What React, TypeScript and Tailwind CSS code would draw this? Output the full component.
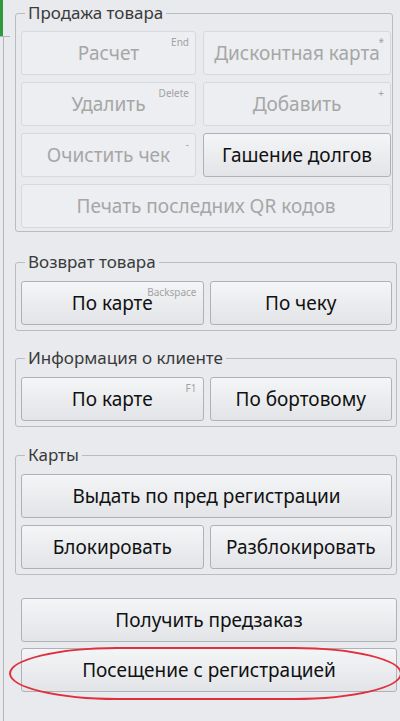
import type { ReactNode } from 'react'

type BtnProps = {
  label: string
  hint?: string
  disabled?: boolean
  className?: string
}

function Btn({ label, hint, disabled, className = '' }: BtnProps) {
  return (
    <button
      type="button"
      disabled={disabled}
      className={[
        'relative flex h-[44px] items-center justify-center rounded-[3px] border text-[19px]',
        disabled
          ? 'border-[#d7d9dd] bg-[#eceef1] text-[#a6a6a6]'
          : 'border-[#aeb1b6] bg-gradient-to-b from-[#f4f5f7] to-[#e2e4e7] text-[#111111]',
        className,
      ].join(' ')}
    >
      {label}
      {hint && (
        <span className="absolute right-[6px] top-[4px] text-[10px] leading-[12px] text-[#a2a2a2]">
          {hint}
        </span>
      )}
    </button>
  )
}

function Group({
  title,
  className = '',
  children,
}: {
  title: string
  className?: string
  children: ReactNode
}) {
  return (
    <fieldset
      className={[
        'rounded-[3px] border border-[#b9bcc1] pl-[5px]',
        className,
      ].join(' ')}
    >
      <legend className="ml-[4px] px-[3px] text-[17px] leading-[20px] text-[#3a3a3a]">
        {title}
      </legend>
      {children}
    </fieldset>
  )
}

export default function App() {
  return (
    <div
      className="relative flex h-[721px] w-[400px] overflow-hidden bg-[#e8eaee]"
      style={{ fontFamily: '"Noto Sans", "Open Sans", sans-serif' }}
    >
      <div className="flex w-[4px] shrink-0 flex-col">
        <div className="h-[36px] w-[3px] bg-[#2f9a3c]" />
        <div className="h-px w-[10px] bg-[#b4b6ba]" />
        <div className="flex-1 border-r border-[#b4b6ba]" />
      </div>

      <div className="flex flex-1 flex-col pl-[11px] pr-[3px] pt-[3px]">
        <Group title="Продажа товара" className="mr-[4px] pb-[3px] pr-px">
          <div className="mt-[8px] grid grid-cols-[175px_1fr] gap-x-[7px] gap-y-[7px]">
            <Btn label="Расчет" hint="End" disabled />
            <Btn label="Дисконтная карта" hint="*" disabled />
            <Btn label="Удалить" hint="Delete" disabled />
            <Btn label="Добавить" hint="+" disabled />
            <Btn label="Очистить чек" hint="-" disabled />
            <Btn label="Гашение долгов" />
            <Btn label="Печать последних QR кодов" disabled className="col-span-2" />
          </div>
        </Group>

        <Group title="Возврат товара" className="mt-[20px] pb-[5px] pr-[4px]">
          <div className="mt-[9px] grid grid-cols-2 gap-x-[6px]">
            <Btn label="По карте" hint="Backspace" />
            <Btn label="По чеку" />
          </div>
        </Group>

        <Group title="Информация о клиенте" className="mt-[17px] pb-[5px] pr-[4px]">
          <div className="mt-[9px] grid grid-cols-2 gap-x-[6px]">
            <Btn label="По карте" hint="F1" />
            <Btn label="По бортовому" />
          </div>
        </Group>

        <Group title="Карты" className="mt-[18px] pb-[5px] pr-[4px]">
          <div className="mt-[9px] grid grid-cols-2 gap-x-[6px] gap-y-[7px]">
            <Btn label="Выдать по пред регистрации" className="col-span-2" />
            <Btn label="Блокировать" />
            <Btn label="Разблокировать" />
          </div>
        </Group>

        <div className="ml-[6px] mt-[23px] flex flex-col gap-[6px]">
          <Btn label="Получить предзаказ" />
          <Btn label="Посещение с регистрацией" />
        </div>
      </div>

      <div className="pointer-events-none absolute left-[9px] top-[647px] h-[53px] w-[393px] rounded-[110px/27px] border-2 border-[#e0303e]" />
    </div>
  )
}
